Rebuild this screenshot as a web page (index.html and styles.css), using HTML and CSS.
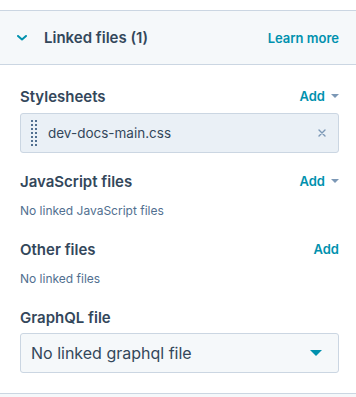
FILE: index.html
```html
<!DOCTYPE html>
<html lang="en">
<head>
    <meta charset="UTF-8">
    <meta name="viewport" content="width=device-width, initial-scale=1.0">
    <title>Linked files</title>
    <link rel="stylesheet" href="styles.css">
</head>
<body>
    <div class="spacer"></div>
    <div class="panel">
        <div class="panel-header">
            <div class="panel-title">
                <svg class="chevron" width="10" height="6" viewBox="0 0 10 6">
                    <path d="M1 1 L5 4.5 L9 1" fill="none" stroke="#0091ae" stroke-width="2" stroke-linecap="round" stroke-linejoin="round"/>
                </svg>
                <span>Linked files (1)</span>
            </div>
            <a class="link" href="#">Learn more</a>
        </div>
        <div class="panel-body">
            <div class="section">
                <div class="section-head">
                    <h3 class="section-title">Stylesheets</h3>
                    <a class="link add" href="#">Add <span class="caret"></span></a>
                </div>
                <div class="file-item">
                    <svg class="drag-handle" width="6" height="26" viewBox="0 0 6 26">
                        <g fill="#516f90">
                            <rect x="0" y="0" width="2" height="2"/><rect x="4" y="0" width="2" height="2"/>
                            <rect x="0" y="4" width="2" height="2"/><rect x="4" y="4" width="2" height="2"/>
                            <rect x="0" y="8" width="2" height="2"/><rect x="4" y="8" width="2" height="2"/>
                            <rect x="0" y="12" width="2" height="2"/><rect x="4" y="12" width="2" height="2"/>
                            <rect x="0" y="16" width="2" height="2"/><rect x="4" y="16" width="2" height="2"/>
                            <rect x="0" y="20" width="2" height="2"/><rect x="4" y="20" width="2" height="2"/>
                            <rect x="0" y="24" width="2" height="2"/><rect x="4" y="24" width="2" height="2"/>
                        </g>
                    </svg>
                    <span class="file-name">dev-docs-main.css</span>
                    <svg class="remove" width="8" height="8" viewBox="0 0 8 8">
                        <path d="M1 1 L7 7 M7 1 L1 7" stroke="#7c98b6" stroke-width="1.4" stroke-linecap="round"/>
                    </svg>
                </div>
            </div>
            <div class="section">
                <div class="section-head">
                    <h3 class="section-title">JavaScript files</h3>
                    <a class="link add" href="#">Add <span class="caret"></span></a>
                </div>
                <p class="empty">No linked JavaScript files</p>
            </div>
            <div class="section">
                <div class="section-head">
                    <h3 class="section-title">Other files</h3>
                    <a class="link add" href="#">Add</a>
                </div>
                <p class="empty">No linked files</p>
            </div>
            <div class="section last">
                <div class="section-head">
                    <h3 class="section-title">GraphQL file</h3>
                </div>
                <div class="select">
                    <span>No linked graphql file</span>
                    <span class="select-caret"></span>
                </div>
            </div>
        </div>
    </div>
    <div class="below"></div>
</body>
</html>
```

FILE: styles.css
```css
body {
    margin: 0;
    font-family: 'Inter', sans-serif;
    color: #33475b;
    background: #fff;
}
.spacer {
    height: 10px;
}
.panel {
    border-top: 1px solid #cbd6e2;
    border-bottom: 1px solid #cbd6e2;
}
.panel-header {
    height: 53px;
    background-color: #f5f8fa;
    border-bottom: 1px solid #cbd6e2;
    display: flex;
    align-items: center;
    justify-content: space-between;
    padding: 0 17px 0 17px;
}
.panel-title {
    display: flex;
    align-items: center;
    gap: 17px;
    font-size: 15px;
    font-weight: 600;
}
.chevron {
    display: block;
    margin-top: 1px;
}
.link {
    color: #0091ae;
    font-size: 13px;
    font-weight: 600;
    text-decoration: none;
}
.panel-body {
    padding: 21px 17px 20px 20px;
}
.section {
    margin-bottom: 18px;
}
.section.last {
    margin-bottom: 0;
}
.section-head {
    height: 20px;
    display: flex;
    align-items: center;
    justify-content: space-between;
}
.section-title {
    margin: 0;
    font-size: 15px;
    font-weight: 600;
}
.add {
    display: flex;
    align-items: center;
    gap: 6px;
}
.caret {
    width: 0;
    height: 0;
    border-left: 4px solid transparent;
    border-right: 4px solid transparent;
    border-top: 4px solid #7c98b6;
}
.file-item {
    margin-top: 7px;
    height: 38px;
    background-color: #eaf0f6;
    border: 1px solid #cbd6e2;
    border-radius: 3px;
    display: flex;
    align-items: center;
    padding: 0 12px 0 10px;
}
.drag-handle {
    display: block;
}
.file-name {
    flex: 1;
    margin-left: 11px;
    font-size: 13.5px;
}
.remove {
    display: block;
}
.empty {
    margin: 10px 0 0;
    line-height: 20px;
    font-size: 12px;
    color: #516f90;
}
.select {
    margin-top: 6px;
    height: 38px;
    background-color: #f5f8fa;
    border: 1px solid #cbd6e2;
    border-radius: 3px;
    display: flex;
    align-items: center;
    justify-content: space-between;
    padding: 0 16px 0 10px;
    font-size: 16px;
}
.select-caret {
    width: 0;
    height: 0;
    border-left: 6px solid transparent;
    border-right: 6px solid transparent;
    border-top: 6px solid #0091ae;
}
.below {
    height: 10px;
    background-color: #f5f8fa;
}
```
